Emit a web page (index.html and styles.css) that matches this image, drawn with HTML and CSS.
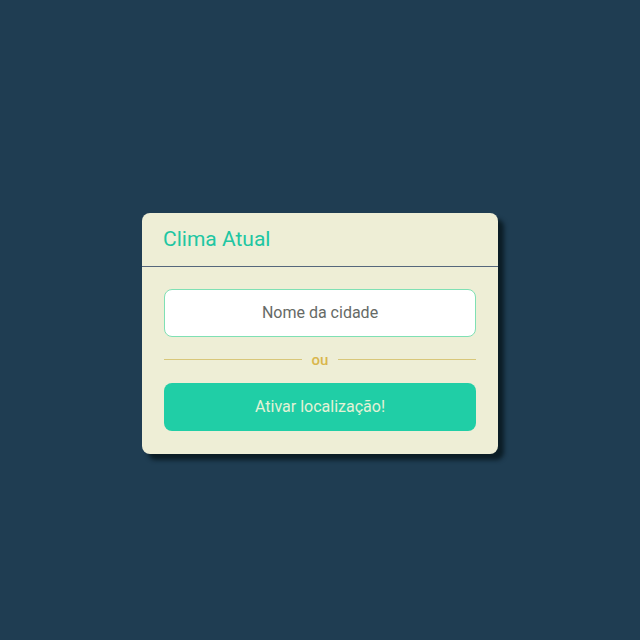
FILE: index.html
```html
<!DOCTYPE html>
<html lang="pt-BR">
<head>
<meta charset="utf-8">
<title>Clima Atual</title>
<link rel="stylesheet" href="styles.css">
</head>
<body>
<main class="page">
  <section class="card">
    <header class="card-header">
      <h1 class="title">Clima Atual</h1>
    </header>
    <div class="card-body">
      <input class="city-input" type="text" placeholder="Nome da cidade">
      <div class="divider"><span class="divider-text">ou</span></div>
      <button class="locate-btn" type="button">Ativar localização!</button>
    </div>
  </section>
</main>
</body>
</html>
```

FILE: styles.css
```css
* { box-sizing: border-box; }
html, body { margin: 0; height: 100%; }
body {
  background: #1f3d52;
  font-family: Roboto, "Noto Sans", sans-serif;
}
.page {
  height: 640px;
  padding-top: 26px;
  display: flex;
  align-items: center;
  justify-content: center;
}
.card {
  width: 356px;
  background: #eeeed6;
  border-radius: 8px;
  box-shadow: 6px 6px 4px rgba(8, 24, 30, 0.85);
}
.card-header {
  height: 54px;
  border-bottom: 1px solid #56677c;
  display: flex;
  align-items: center;
  padding: 0 21px;
}
.title {
  margin: 0;
  font-size: 21px;
  font-weight: 400;
  color: #20c6a2;
}
.card-body {
  padding: 22px 22px 23px 22px;
  display: flex;
  flex-direction: column;
}
.city-input {
  height: 48px;
  width: 100%;
  border: 1px solid #7fe0b4;
  border-radius: 8px;
  background: #ffffff;
  text-align: center;
  font-family: Roboto, "Noto Sans", sans-serif;
  font-size: 16px;
  color: #555;
  outline: none;
}
.city-input::placeholder { color: #666a66; }
.divider {
  display: flex;
  align-items: center;
  gap: 10px;
  margin: 16px 0 16px;
  height: 14px;
}
.divider::before, .divider::after {
  content: "";
  flex: 1;
  height: 1px;
  background: #d8c77a;
}
.divider-text {
  font-size: 15px;
  font-weight: 500;
  color: #d9b64c;
  line-height: 14px;
}
.locate-btn {
  height: 48px;
  width: 100%;
  border: none;
  border-radius: 8px;
  background: #20cea6;
  color: #e4f2d6;
  font-family: Roboto, "Noto Sans", sans-serif;
  font-size: 16px;
  cursor: pointer;
}
```
